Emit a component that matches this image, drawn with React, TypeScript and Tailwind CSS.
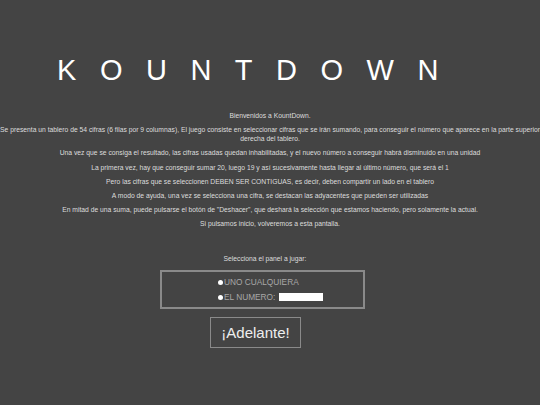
export default function App() {
  const lines = [
    'Una vez que se consiga el resultado, las cifras usadas quedan inhabilitadas, y el nuevo número a conseguir habrá disminuido en una unidad',
    'La primera vez, hay que conseguir sumar 20, luego 19 y así sucesivamente hasta llegar al último número, que será el 1',
    'Pero las cifras que se seleccionen DEBEN SER CONTIGUAS, es decir, deben compartir un lado en el tablero',
    'A modo de ayuda, una vez se selecciona una cifra, se destacan las adyacentes que pueden ser utilizadas',
    'En mitad de una suma, puede pulsarse el botón de "Deshacer", que deshará la selección que estamos haciendo, pero solamente la actual.',
    'Si pulsamos inicio, volveremos a esta pantalla.',
  ];

  return (
    <div className="w-[540px] h-[405px] overflow-hidden bg-[#444444] text-[#dddddd] font-['Liberation_Sans',Arial,sans-serif]">
      {/* Title */}
      <h1 className="pt-[54px] text-center text-[29px] leading-[32px] tracking-[23.5px] pr-[21px] text-white font-normal">
        KOUNTDOWN
      </h1>

      {/* Intro */}
      <div className="mt-[25px] flex flex-col gap-[5.2px] text-center text-[6.75px] leading-[9px]">
        <p>Bienvenidos a KountDown.</p>
        <p className="whitespace-nowrap">
          Se presenta un tablero de 54 cifras (6 filas por 9 columnas), El juego consiste en seleccionar cifras que se irán sumando, para conseguir el número que aparece en la parte superior
          <br />
          derecha del tablero.
        </p>
        {lines.map((l) => (
          <p key={l}>{l}</p>
        ))}
      </div>

      {/* Panel selection */}
      <p className="mt-[26px] pr-[10px] text-center text-[6.75px] leading-[9px]">Selecciona el panel a jugar:</p>

      <div className="ml-[160px] mt-[7px] w-[205px] h-[39px] border-2 border-[#8a8a8a] flex flex-col justify-center gap-[4px] pl-[56px] text-[8.3px] leading-[11px] text-[#a8a8a8]">
        <div className="flex items-center">
          <span className="w-[5px] h-[5px] rounded-full bg-white mr-[1px]" />
          UNO CUALQUIERA
        </div>
        <div className="flex items-center whitespace-nowrap">
          <span className="w-[5px] h-[5px] rounded-full bg-white mr-[1px]" />
          EL NUMERO:
          <span className="ml-[4px] w-[44px] h-[8px] bg-white" />
        </div>
      </div>

      <div className="pl-[210px] mt-[8px]">
        <button className="w-[91px] h-[31px] border border-[#8a8a8a] bg-transparent text-[15px] text-[#eeeeee]">
          ¡Adelante!
        </button>
      </div>
    </div>
  );
}
